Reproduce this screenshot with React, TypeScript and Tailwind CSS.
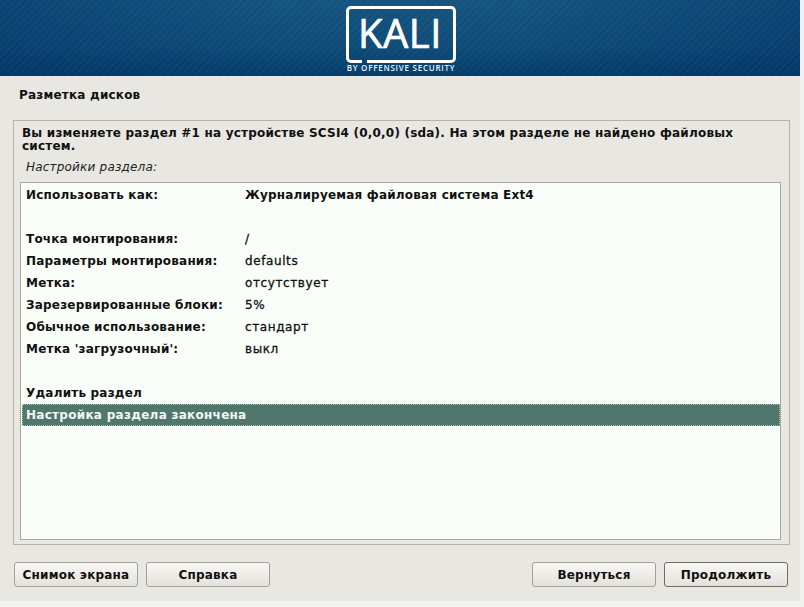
const rows = [
  { label: 'Использовать как:', value: 'Журналируемая файловая система Ext4', bold: true },
  { spacer: true },
  { label: 'Точка монтирования:', value: '/' },
  { label: 'Параметры монтирования:', value: 'defaults' },
  { label: 'Метка:', value: 'отсутствует' },
  { label: 'Зарезервированные блоки:', value: '5%' },
  { label: 'Обычное использование:', value: 'стандарт' },
  { label: "Метка 'загрузочный':", value: 'выкл' },
  { spacer: true },
]

function WizardButton({ label, width, active }: { label: string; width: string; active?: boolean }) {
  return (
    <button
      type="button"
      className={[
        'flex h-[25px] items-center justify-center rounded-[3px] border bg-gradient-to-b from-[#f8f7f4] to-[#e4e2da] text-[12px] font-bold tracking-[0.2px] text-[#111]',
        width,
        active ? 'border-[#6e6c64]' : 'border-[#a3a196]',
      ].join(' ')}
    >
      {label}
    </button>
  )
}

export default function App() {
  return (
    <div className="h-[607px] w-[804px] overflow-hidden bg-[#f1f1ef] font-['DejaVu_Sans',sans-serif] text-[#111]">
      <div className="h-[601px] w-[800px] bg-[#e8e7e1]">
        <header className="flex h-[76px] justify-center bg-[#14527f] bg-[repeating-linear-gradient(135deg,rgba(255,255,255,0.025)_0px,rgba(255,255,255,0.025)_2px,transparent_2px,transparent_5px),linear-gradient(90deg,rgba(0,45,100,0.4)_0%,transparent_35%,transparent_65%,rgba(0,45,100,0.4)_100%),linear-gradient(180deg,#14547f_0%,#0f4c78_60%,#033d6c_100%)]">
          <div className="ml-[2px] flex w-[110px] flex-col items-center pt-[6px]">
            <svg width="110" height="58" viewBox="0 0 110 58" className="block">
              <path
                d="M16 55.5H5a3.5 3.5 0 0 1-3.5-3.5V5A3.5 3.5 0 0 1 5 1.5h100a3.5 3.5 0 0 1 3.5 3.5v47a3.5 3.5 0 0 1-3.5 3.5H21"
                fill="none"
                stroke="#fff"
                strokeWidth="3"
              />
              <text x="54" y="42" textAnchor="middle" fill="#fff" stroke="#fff" strokeWidth="0.7" letterSpacing="0.6" fontFamily="'Open Sans', sans-serif" fontSize="40">
                KALI
              </text>
            </svg>
            <span className="mt-[-1px] whitespace-nowrap font-['Open_Sans',sans-serif] text-[8px] leading-[10px] font-semibold tracking-[0.75px] text-[#eef3f7]">
              BY OFFENSIVE SECURITY
            </span>
          </div>
        </header>

        <div className="px-[13px]">
          <h1 className="ml-[6px] pt-[12px] text-[12px] leading-[15px] font-bold tracking-[0.2px]">Разметка дисков</h1>

          <section className="mt-[17px] h-[425px] w-[777px] border border-[#b5b3a8] px-[6px] pt-[6px]">
            <p className="ml-[2px] w-[735px] text-[12px] leading-[13px] font-bold tracking-[0.2px]">
              Вы изменяете раздел #1 на устройстве SCSI4 (0,0,0) (sda). На этом разделе не найдено файловых систем.
            </p>
            <p className="mt-[7px] ml-[6px] text-[12px] leading-[15px] tracking-[0.2px] text-[#222] italic">Настройки раздела:</p>

            <div className="mt-[7px] h-[358px] w-[761px] border border-[#aaa89c] bg-[#f9fdf8] pt-[1px] pl-[1px]">
              {rows.map((row, index) =>
                row.spacer ? (
                  <div key={index} className="h-[22px]" />
                ) : (
                  <div key={index} className="flex h-[22px] items-center pl-[4px] text-[12px] tracking-[0.2px]">
                    <span className="w-[219px] font-bold">{row.label}</span>
                    <span className={row.bold ? 'font-bold' : 'tracking-[0.6px] [-webkit-text-stroke:0.3px_#111]'}>{row.value}</span>
                  </div>
                ),
              )}
              <div className="flex h-[22px] items-center pl-[4px] text-[12px] font-bold tracking-[0.2px]">Удалить раздел</div>
              <div className="flex h-[22px] w-[758px] items-center border border-dotted border-[#a9bdb6] bg-[#4f776c] pl-[3px] text-[12px] font-bold tracking-[0.28px] text-[#f2f7f4]">
                Настройка раздела закончена
              </div>
            </div>
          </section>

          <footer className="mt-[17px] ml-px flex w-[774px] items-center">
            <WizardButton label="Снимок экрана" width="w-[124px]" />
            <div className="ml-[8px]">
              <WizardButton label="Справка" width="w-[124px]" />
            </div>
            <div className="ml-auto flex gap-[8px]">
              <WizardButton label="Вернуться" width="w-[124px]" />
              <WizardButton label="Продолжить" width="w-[124px]" active />
            </div>
          </footer>
        </div>
      </div>
    </div>
  )
}
